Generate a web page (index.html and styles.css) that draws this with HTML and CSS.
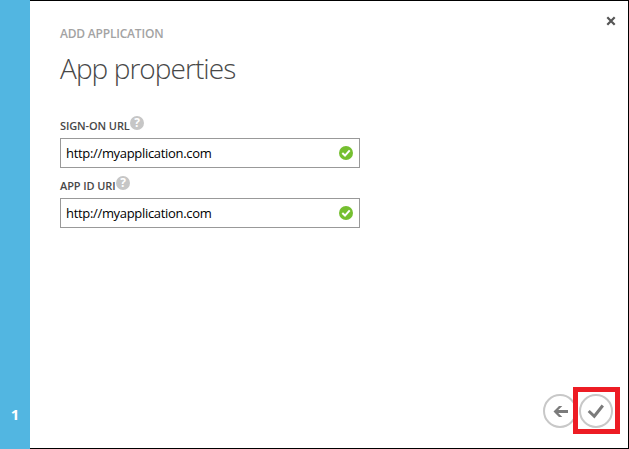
FILE: index.html
```html
<!DOCTYPE html>
<html lang="en">
<head>
<meta charset="utf-8">
<title>Add application</title>
<link rel="stylesheet" href="styles.css">
</head>
<body>
<div class="wizard">
  <aside class="steps"><span class="step">1</span></aside>
  <main class="panel">
    <button class="close" aria-label="Close">
      <svg width="10" height="10" viewBox="0 0 10 10"><path d="M1.3 1.3 8.7 8.7M8.7 1.3 1.3 8.7"/></svg>
    </button>
    <header class="heading">
      <div class="eyebrow">ADD APPLICATION</div>
      <h1 class="title">App properties</h1>
    </header>
    <form class="form">
      <div class="field">
        <div class="label"><span class="label-text label-signon">SIGN-ON URL</span><span class="help">?</span></div>
        <div class="input"><span class="value">http://myapplication.com</span>
          <svg class="valid" width="14" height="14" viewBox="0 0 14 14"><circle cx="7" cy="7" r="7"/><path d="M3.3 7.1 6 9.6 10.7 4.4"/></svg>
        </div>
      </div>
      <div class="field">
        <div class="label"><span class="label-text label-appid">APP ID URI</span><span class="help">?</span></div>
        <div class="input"><span class="value">http://myapplication.com</span>
          <svg class="valid" width="14" height="14" viewBox="0 0 14 14"><circle cx="7" cy="7" r="7"/><path d="M3.3 7.1 6 9.6 10.7 4.4"/></svg>
        </div>
      </div>
    </form>
    <footer class="actions">
      <svg class="round back" width="34" height="34" viewBox="0 0 34 34"><circle cx="17" cy="17" r="16"/><path class="arrow" d="M25 17.5H13"/><path class="arrow-head" d="M10.5 17.5 16 12H19.3L15 16.2V18.8L19.3 23H16Z"/></svg>
      <div class="highlight">
        <svg class="round" width="34" height="34" viewBox="0 0 34 34"><circle cx="17" cy="17" r="16"/><path class="tick" d="M9.7 17 15.3 22.3 23.8 11.5"/></svg>
      </div>
    </footer>
  </main>
</div>
</body>
</html>
```
FILE: styles.css
```css
* {
  box-sizing: border-box;
}

body {
  margin: 0;
  font-family: "Open Sans", "Noto Sans", sans-serif;
  background: #fff;
}

.wizard {
  display: flex;
  width: 629px;
  height: 449px;
}

.steps {
  display: flex;
  flex: 0 0 30px;
  align-items: flex-end;
  justify-content: center;
  padding-bottom: 25px;
  background: #52b6e1;
}

.step {
  color: #fff;
  font-size: 15px;
  font-weight: 700;
  line-height: 20px;
}

.panel {
  position: relative;
  display: flex;
  flex: 1;
  flex-direction: column;
  padding: 23px 8px 14px 30px;
  border: 1px solid #000;
  border-left: 0;
}

.close {
  position: absolute;
  top: 15px;
  right: 12px;
  display: flex;
  padding: 0;
  border: 0;
  background: none;
}

.close path {
  fill: none;
  stroke: #555;
  stroke-width: 2.2;
}

.eyebrow {
  color: #a3a3a3;
  font-size: 12px;
  font-weight: 600;
  letter-spacing: -0.2px;
  line-height: 20px;
  white-space: nowrap;
}

.title {
  margin: 4px 0 0;
  color: #484848;
  font-size: 28px;
  font-weight: 300;
  letter-spacing: -0.94px;
  line-height: 40px;
  white-space: nowrap;
}

.form {
  display: flex;
  flex-direction: column;
  width: 300px;
  margin-top: 27px;
}

.field {
  height: 60px;
}

.label {
  display: flex;
  height: 23px;
}

.label-text {
  padding-top: 3px;
  color: #484848;
  font-size: 11px;
  font-weight: 600;
  letter-spacing: -0.1px;
  line-height: 16px;
  white-space: nowrap;
}

.label-signon {
  width: 70px;
}

.label-appid {
  width: 56px;
}

.help {
  width: 14px;
  height: 14px;
  margin-top: 1px;
  border-radius: 50%;
  background: #c6c6c6;
  color: #fff;
  font-size: 12px;
  font-weight: 700;
  line-height: 14px;
  text-align: center;
}

.input {
  display: flex;
  align-items: center;
  justify-content: space-between;
  height: 30px;
  padding: 0 6px 0 5px;
  border: 1px solid #999;
}

.value {
  color: #000;
  font-size: 13px;
  letter-spacing: -0.32px;
  line-height: 20px;
}

.valid circle {
  fill: #75bf30;
}

.valid path {
  fill: none;
  stroke: #fff;
  stroke-width: 2;
}

.actions {
  display: flex;
  align-items: center;
  justify-content: flex-end;
  margin-top: auto;
}

.back {
  margin-right: -4px;
}

.round circle {
  fill: #fff;
  stroke: #c8c8c8;
  stroke-width: 2;
}

.round .arrow,
.round .tick {
  fill: none;
  stroke: #7b7b7b;
  stroke-width: 3;
}

.round .arrow-head {
  fill: #7b7b7b;
}

.highlight {
  z-index: 1;
  display: flex;
  align-items: center;
  width: 47px;
  height: 47px;
  padding-left: 1px;
  border: 5px solid #ed1c24;
  background: #fff;
}
```
